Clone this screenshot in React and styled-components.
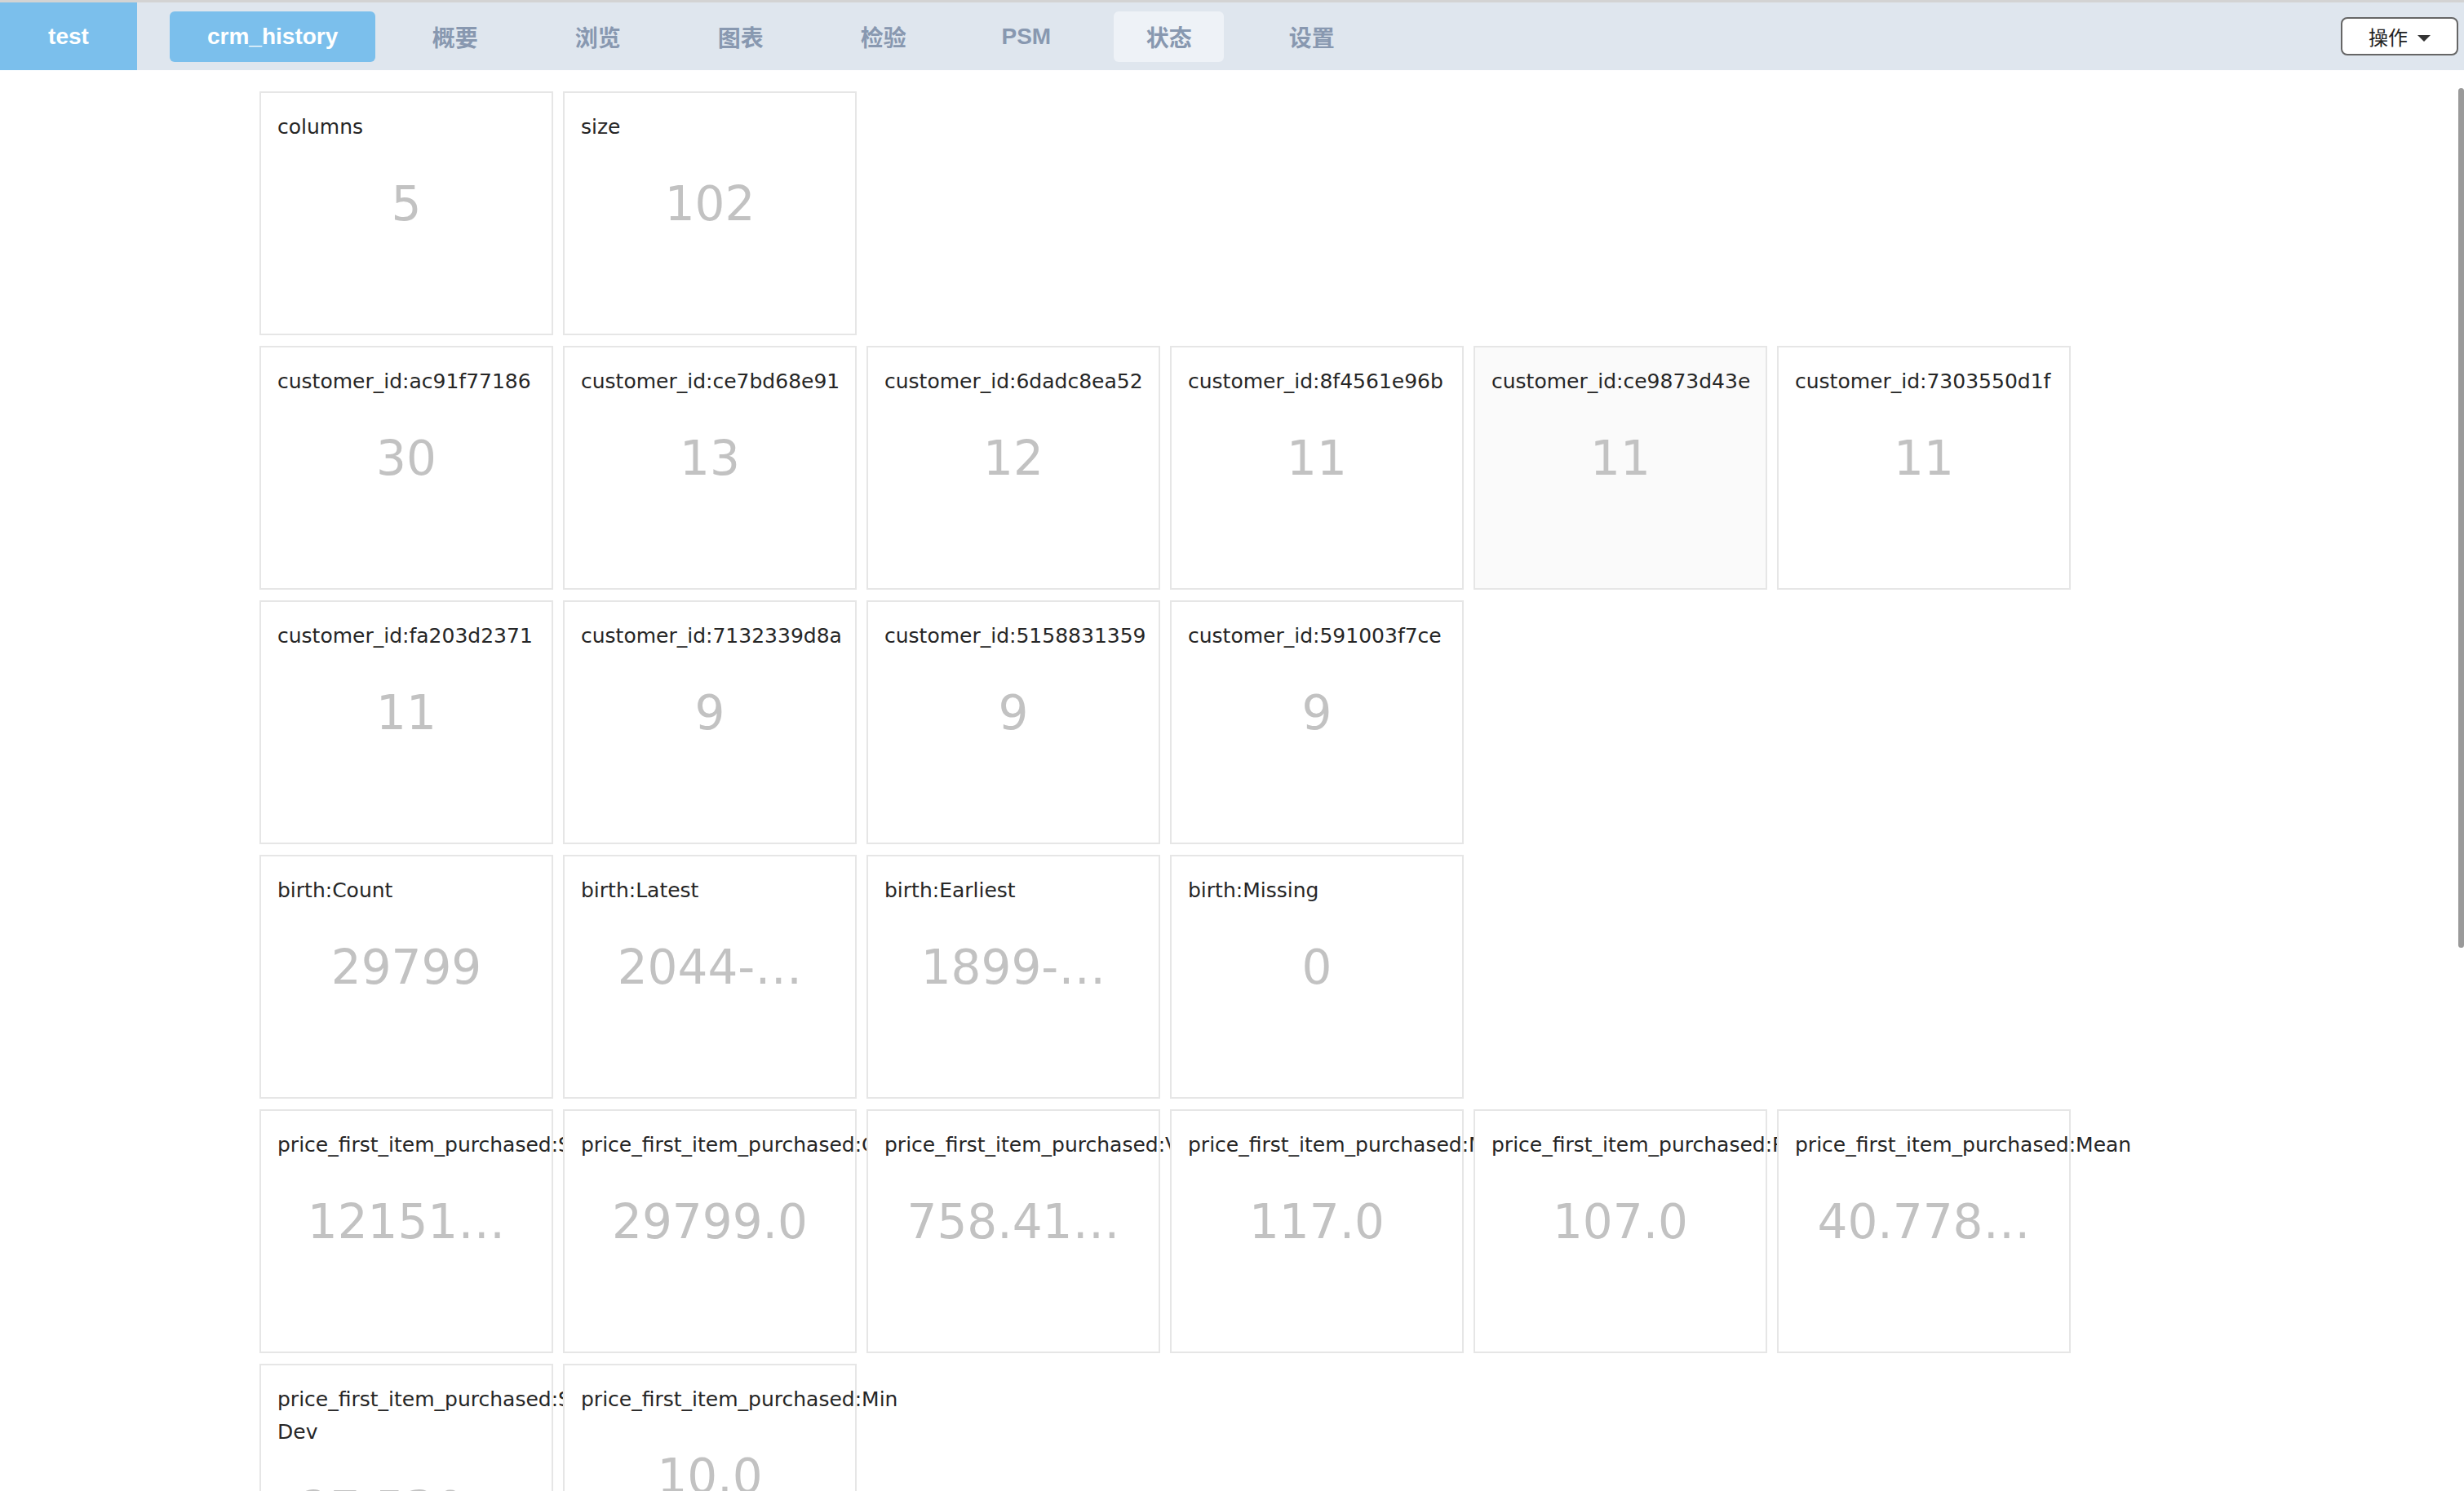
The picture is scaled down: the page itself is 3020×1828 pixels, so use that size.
import React from 'react';
import styled, { createGlobalStyle } from 'styled-components';

const GlobalStyle = createGlobalStyle`
  html, body {
    margin: 0;
    padding: 0;
    background: #ffffff;
    overflow: hidden;
  }
  body {
    font-family: "DejaVu Sans", "Noto Sans CJK SC", sans-serif;
  }
`;

const Page = styled.div`
  width: 3020px;
  height: 1828px;
  overflow: hidden;
  box-sizing: border-box;
  border-top: 3px solid #d3d3d3;
  background: #ffffff;
`;

const Header = styled.header`
  display: flex;
  align-items: center;
  height: 83px;
  background: #dfe6ee;
`;

const Brand = styled.div`
  align-self: stretch;
  width: 168px;
  display: flex;
  align-items: center;
  justify-content: center;
  background: #7bbfec;
  color: #ffffff;
  font: 700 28px "Liberation Sans", "Noto Sans CJK SC", sans-serif;
`;

const Nav = styled.nav`
  display: flex;
  align-items: center;
  gap: 40px;
  margin-left: 40px;
  flex: 1;
`;

const Tab = styled.div`
  height: 62px;
  min-width: 135px;
  box-sizing: border-box;
  padding: 0 ${(p) => (p.$primary ? '46px' : '0')};
  display: flex;
  align-items: center;
  justify-content: center;
  border-radius: 6px;
  font: 700 28px "Liberation Sans", "Noto Sans CJK SC", sans-serif;
  color: ${(p) => (p.$primary ? '#ffffff' : '#8898b0')};
  background: ${(p) => (p.$primary ? '#7bbfec' : p.$active ? '#eef2f7' : 'transparent')};
  margin-right: ${(p) => (p.$primary ? '-10px' : '0')};
`;

const ActionButton = styled.button`
  margin-left: auto;
  margin-right: 7px;
  width: 144px;
  height: 47px;
  box-sizing: border-box;
  display: flex;
  align-items: center;
  justify-content: center;
  gap: 12px;
  background: #ffffff;
  border: 2px solid #666666;
  border-radius: 8px;
  font: 400 24px "Noto Sans CJK SC", sans-serif;
  color: #222222;
  padding: 0;
`;

const Caret = styled.span`
  width: 0;
  height: 0;
  border-left: 8px solid transparent;
  border-right: 8px solid transparent;
  border-top: 8px solid #333333;
  margin-top: 4px;
`;

const Main = styled.main`
  display: flex;
  flex-direction: column;
  gap: 13px;
  padding: 26px 0 0 318px;
  width: 2240px;
`;

const Group = styled.section`
  display: flex;
  flex-wrap: wrap;
  column-gap: 12px;
  row-gap: 13px;
`;

const Card = styled.div`
  width: 360px;
  height: 299px;
  box-sizing: border-box;
  border: 2px solid #e6e6e6;
  background: ${(p) => (p.$hover ? '#fafafa' : '#ffffff')};
  padding: 22px 20px 20px;
  display: flex;
  flex-direction: column;
`;

const Title = styled.div`
  font: 400 25px/40px "DejaVu Sans", sans-serif;
  color: #262626;
  white-space: normal;
`;

const Value = styled.div`
  margin-top: 34px;
  font: 400 58px/80px "DejaVu Sans", sans-serif;
  color: #c2c2c2;
  text-align: center;
  white-space: nowrap;
  overflow: hidden;
  text-overflow: ellipsis;
`;

const ScrollThumb = styled.div`
  position: fixed;
  right: 0;
  top: 108px;
  width: 7px;
  height: 1054px;
  border-radius: 4px;
  background: #9a9a9a;
`;

const tabs = ['概要', '浏览', '图表', '检验', 'PSM', '状态', '设置'];

const groups = [
  [
    { t: 'columns', v: '5' },
    { t: 'size', v: '102' },
  ],
  [
    { t: 'customer_id:ac91f77186', v: '30' },
    { t: 'customer_id:ce7bd68e91', v: '13' },
    { t: 'customer_id:6dadc8ea52', v: '12' },
    { t: 'customer_id:8f4561e96b', v: '11' },
    { t: 'customer_id:ce9873d43e', v: '11', hover: true },
    { t: 'customer_id:7303550d1f', v: '11' },
    { t: 'customer_id:fa203d2371', v: '11' },
    { t: 'customer_id:7132339d8a', v: '9' },
    { t: 'customer_id:5158831359', v: '9' },
    { t: 'customer_id:591003f7ce', v: '9' },
  ],
  [
    { t: 'birth:Count', v: '29799' },
    { t: 'birth:Latest', v: '2044-…' },
    { t: 'birth:Earliest', v: '1899-…' },
    { t: 'birth:Missing', v: '0' },
  ],
  [
    { t: 'price_first_item_purchased:Sum', v: '12151…' },
    { t: 'price_first_item_purchased:Count', v: '29799.0' },
    { t: 'price_first_item_purchased:Variance', v: '758.41…' },
    { t: 'price_first_item_purchased:Max', v: '117.0' },
    { t: 'price_first_item_purchased:Range', v: '107.0' },
    { t: 'price_first_item_purchased:Mean', v: '40.778…' },
    { t: 'price_first_item_purchased:Std Dev', v: '27.530…' },
    { t: 'price_first_item_purchased:Min', v: '10.0' },
  ],
];

export default function App() {
  return (
    <Page>
      <GlobalStyle />
      <Header>
        <Brand>test</Brand>
        <Nav>
          <Tab $primary>crm_history</Tab>
          {tabs.map((t) => (
            <Tab key={t} $active={t === '状态'}>
              {t}
            </Tab>
          ))}
        </Nav>
        <ActionButton>
          操作
          <Caret />
        </ActionButton>
      </Header>
      <Main>
        {groups.map((g, gi) => (
          <Group key={gi}>
            {g.map((c) => (
              <Card key={c.t} $hover={c.hover}>
                <Title>{c.t}</Title>
                <Value>{c.v}</Value>
              </Card>
            ))}
          </Group>
        ))}
      </Main>
      <ScrollThumb />
    </Page>
  );
}
